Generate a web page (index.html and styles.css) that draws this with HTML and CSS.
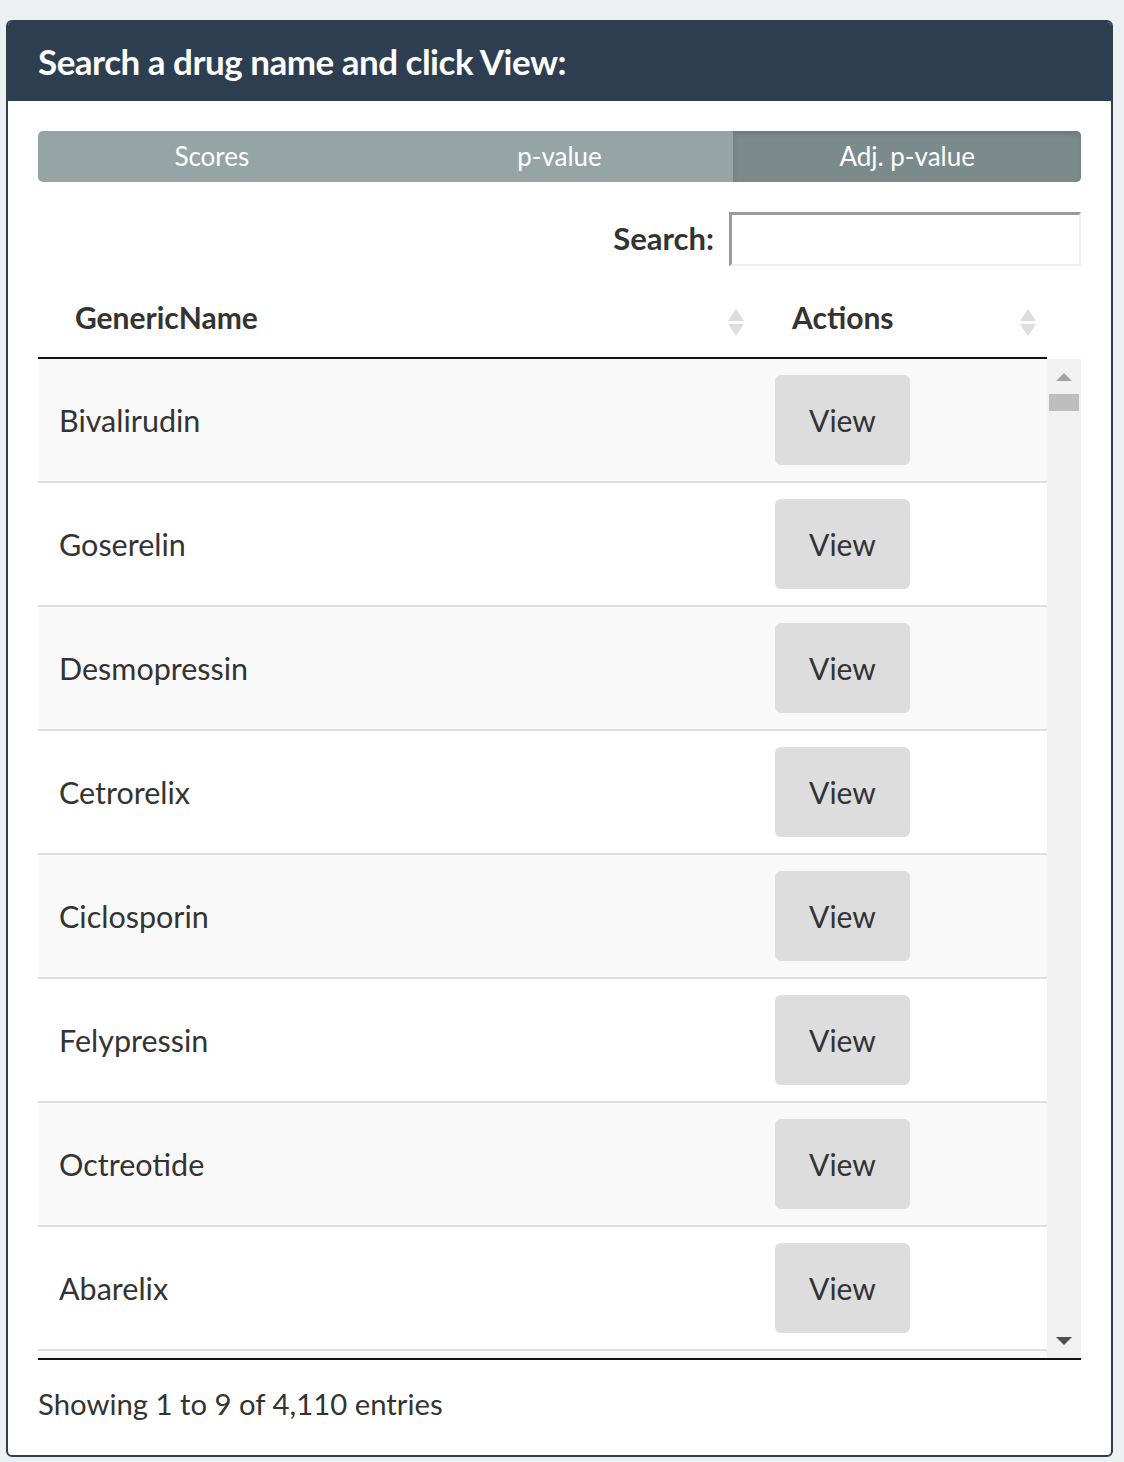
FILE: index.html
```html
<!DOCTYPE html>
<html>
<head>
<meta charset="utf-8">
<link rel="stylesheet" href="styles.css">
</head>
<body>
<div class="card">
  <div class="card-head">Search a drug name and click View:</div>
  <div class="card-body">
    <div class="tabs">
      <div class="tab">Scores</div>
      <div class="tab">p-value</div>
      <div class="tab active">Adj. p-value</div>
    </div>
    <div class="search-row">
      <label class="search-label">Search:</label>
      <div class="search-input"></div>
    </div>
    <div class="thead">
      <div class="th th-name">GenericName<span class="sort"><i class="up"></i><i class="down"></i></span></div>
      <div class="th th-act">Actions<span class="sort"><i class="up"></i><i class="down"></i></span></div>
    </div>
    <div class="tbody-wrap">
      <div class="rows">
        <div class="row odd"><div class="cell-name">Bivalirudin</div><div class="cell-act"><span class="btn">View</span></div></div>
        <div class="row"><div class="cell-name">Goserelin</div><div class="cell-act"><span class="btn">View</span></div></div>
        <div class="row odd"><div class="cell-name">Desmopressin</div><div class="cell-act"><span class="btn">View</span></div></div>
        <div class="row"><div class="cell-name">Cetrorelix</div><div class="cell-act"><span class="btn">View</span></div></div>
        <div class="row odd"><div class="cell-name">Ciclosporin</div><div class="cell-act"><span class="btn">View</span></div></div>
        <div class="row"><div class="cell-name">Felypressin</div><div class="cell-act"><span class="btn">View</span></div></div>
        <div class="row odd"><div class="cell-name">Octreotide</div><div class="cell-act"><span class="btn">View</span></div></div>
        <div class="row"><div class="cell-name">Abarelix</div><div class="cell-act"><span class="btn">View</span></div></div>
        <div class="row odd"></div>
      </div>
      <div class="scrollbar">
        <span class="arrow-up"></span>
        <span class="thumb"></span>
        <span class="track-fill"></span>
        <span class="arrow-down"></span>
      </div>
    </div>
    <div class="info">Showing 1 to 9 of 4,110 entries</div>
  </div>
</div>
</body>
</html>
```

FILE: styles.css
```css
html, body {
  margin: 0;
  padding: 0;
  background: #ecf0f1;
  font-family: Lato, "Open Sans", sans-serif;
  color: #333;
}
.card {
  margin: 20px 11px 0 6px;
  border: 2px solid #2c3e50;
  border-radius: 6px;
  background: #fff;
  height: 1437px;
  box-sizing: border-box;
  overflow: hidden;
}
.card-head {
  background: #2c3e50;
  color: #fff;
  font-weight: 700;
  font-size: 35px;
  height: 79px;
  line-height: 78px;
  padding-left: 30px;
  letter-spacing: -0.5px;
}
.card-body {
  padding: 30px 30px 0 30px;
}
.tabs {
  display: flex;
  height: 51px;
  border-radius: 5px;
  overflow: hidden;
  background: #95a5a6;
}
.tab {
  flex: 1;
  color: #fff;
  font-size: 26px;
  line-height: 51px;
  text-align: center;
}
.tab.active {
  background: #7b8a8b;
  box-shadow: inset 0 3px 5px rgba(0,0,0,0.125);
}
.search-row {
  display: flex;
  justify-content: flex-end;
  align-items: center;
  margin-top: 30px;
  height: 54px;
}
.search-label {
  font-weight: 700;
  font-size: 31px;
  margin-right: 15px;
  margin-top: -2px;
  color: #333;
}
.search-input {
  width: 352px;
  height: 54px;
  box-sizing: border-box;
  border-style: solid;
  border-width: 3px 2px 2px 3px;
  border-color: #9a9a9a #eee #eee #9a9a9a;
  background: #fff;
}
.thead {
  display: flex;
  width: 1009px;
  height: 90px;
  border-bottom: 2px solid #111;
  margin-top: 1px;
}
.th {
  position: relative;
  font-weight: 700;
  font-size: 30px;
  line-height: 100px;
  box-sizing: border-box;
  padding-left: 37px;
}
.th-name { width: 717px; }
.th-act { width: 292px; }
.sort {
  position: absolute;
  top: 42px;
  right: 10px;
  width: 18px;
  height: 30px;
}
.sort i {
  position: absolute;
  left: 1px;
  width: 0;
  height: 0;
  border-left: 8px solid transparent;
  border-right: 8px solid transparent;
}
.sort .up {
  top: 0;
  border-bottom: 12px solid #ddd;
}
.sort .down {
  top: 15px;
  border-top: 12px solid #ddd;
}
.tbody-wrap {
  display: flex;
  height: 999px;
  border-bottom: 2px solid #111;
  overflow: hidden;
}
.rows {
  width: 1009px;
}
.row {
  display: flex;
  height: 122px;
  border-bottom: 2px solid #ddd;
  background: #fff;
  align-items: center;
}
.row.odd { background: #f9f9f9; }
.cell-name {
  width: 717px;
  padding-left: 21px;
  box-sizing: border-box;
  font-size: 30.5px;
  color: #333;
}
.cell-act {
  width: 292px;
  padding-left: 20px;
  box-sizing: border-box;
}
.btn {
  display: flex;
  align-items: center;
  justify-content: center;
  width: 135px;
  height: 90px;
  background: #ddd;
  border-radius: 6px;
  font-size: 30px;
  color: #333;
}
.scrollbar {
  width: 34px;
  background: #f1f1f1;
  display: flex;
  flex-direction: column;
  align-items: center;
}
.arrow-up {
  margin-top: 14px;
  width: 0;
  height: 0;
  border-left: 8px solid transparent;
  border-right: 8px solid transparent;
  border-bottom: 8px solid #a3a3a3;
}
.thumb {
  margin-top: 13px;
  width: 30px;
  height: 17px;
  background: #bebebe;
}
.track-fill { flex: 1; }
.arrow-down {
  margin-bottom: 13px;
  width: 0;
  height: 0;
  border-left: 8px solid transparent;
  border-right: 8px solid transparent;
  border-top: 8px solid #505050;
}
.info {
  font-size: 29.3px;
  color: #333;
  margin-top: 26px;
}
```
